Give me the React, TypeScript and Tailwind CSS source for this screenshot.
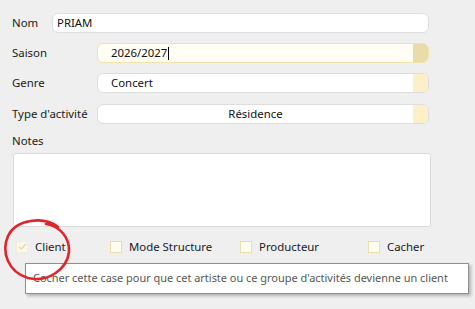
import React from "react";

function Field({ label, value, variant, center, labelW, textPad }: { label: string; value: string; variant: "plain" | "active" | "combo"; center?: boolean; labelW: string; textPad: string }) {
  const box =
    variant === "active"
      ? "border-[#f1e3ac] bg-[#fffdf4]"
      : "border-[#dedede] bg-white";
  return (
    <div className="flex items-center h-[20px]">
      <div className={`${labelW} shrink-0 text-[11.4px] text-[#202020] pl-[12px]`}>{label}</div>
      <div className={`flex-1 h-[20px] border rounded-[6px] overflow-hidden flex items-stretch ${box}`}>
        <div className={`flex-1 flex items-center text-[11.4px] text-[#111] ${center ? "justify-center" : textPad}`}>
          {value}
          {variant === "active" && <span className="inline-block w-px h-[13px] bg-black ml-px" />}
        </div>
        {variant !== "plain" && (
          <div className={`w-[15px] ${variant === "active" ? "bg-[#e9dbaa]" : "bg-[#fdf0c9]"}`} />
        )}
      </div>
    </div>
  );
}

function Check({ label, checked }: { label: string; checked?: boolean }) {
  return (
    <div className="flex items-center gap-[7px]">
      <div className={`w-[12px] h-[12px] border flex items-center justify-center ${checked ? "border-[#f3ecd6] bg-[#fbf7ea]" : "border-[#ecdcaa] bg-[#fffcf0]"}`}>
        {checked && (
          <svg width="9" height="9" viewBox="0 0 9 9">
            <path d="M1 4.8 L3.4 7 L8 1.8" stroke="#e2d3a8" strokeWidth="1.2" fill="none" />
          </svg>
        )}
      </div>
      <span className="text-[11.4px] text-[#202020]">{label}</span>
    </div>
  );
}

export default function App() {
  return (
    <div
      className="relative w-[475px] h-[309px] bg-[#efefef] overflow-hidden"
      style={{ fontFamily: '"Noto Sans", "Open Sans", sans-serif' }}
    >
      <div className="flex flex-col pr-[46px] pt-[13px]">
        <div className="flex flex-col gap-[10px]">
          <Field label="Nom" value="PRIAM" variant="plain" labelW="w-[52px]" textPad="pl-[4px]" />
          <Field label="Saison" value="2026/2027" variant="active" labelW="w-[97px]" textPad="pl-[13px]" />
          <Field label="Genre" value="Concert" variant="combo" labelW="w-[97px]" textPad="pl-[13px]" />
          <div className="mt-px">
            <Field label="Type d'activité" value="Résidence" variant="combo" center labelW="w-[97px]" textPad="pl-[13px]" />
          </div>
        </div>
        <div className="text-[11.4px] text-[#202020] pl-[12px] mt-[9px] leading-[16px]">Notes</div>
        <div className="ml-[13px] mr-[-2px] mt-[4px] h-[74px] bg-white border border-[#dcdcdc] rounded-[3px]" />
        <div className="flex items-center h-[18px] mt-[11px] pl-[16px]">
          <div className="w-[94px]"><Check label="Client" checked /></div>
          <div className="w-[130px]"><Check label="Mode Structure" /></div>
          <div className="w-[128px]"><Check label="Producteur" /></div>
          <Check label="Cacher" />
        </div>
      </div>

      <div className="absolute left-[25px] top-[263px] w-[444px] h-[31px] bg-white border border-[#8f8f8f] shadow-[2px_2px_3px_rgba(0,0,0,0.25)] flex items-center pl-[7px] text-[10.95px] text-[#575757] whitespace-nowrap">
        Cocher cette case pour que cet artiste ou ce groupe d'activités devienne un client
      </div>

      <svg className="absolute left-0 top-0" width="100" height="300" viewBox="0 0 100 300">
        <path
          d="M58 227 C 44 216, 16 219, 8 236 C 1 252, 8 272, 28 278 C 48 283, 67 269, 69 252 C 70 238, 60 226, 46 224"
          stroke="#e0262a"
          strokeWidth="2.6"
          fill="none"
          strokeLinecap="round"
        />
      </svg>
    </div>
  );
}
